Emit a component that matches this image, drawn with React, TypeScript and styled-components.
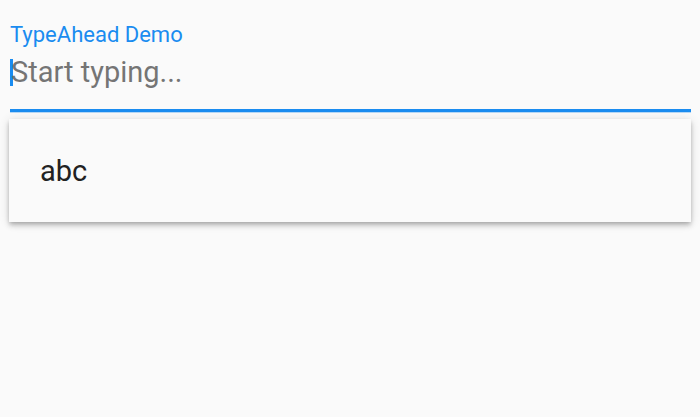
import React from 'react';
import styled, { createGlobalStyle } from 'styled-components';

const GlobalStyle = createGlobalStyle`
  html, body {
    margin: 0;
    padding: 0;
    background: #fafafa;
    font-family: Roboto, "Noto Sans", sans-serif;
  }
`;

const accent = '#1a8cf0';

const Page = styled.div`
  width: 700px;
  height: 417px;
  background: #fafafa;
  display: flex;
  flex-direction: column;
`;

const Field = styled.div`
  margin: 23px 9px 0 10px;
  display: flex;
  flex-direction: column;
  border-bottom: 3px solid ${accent};
  box-shadow: 0 1px 0 0 rgba(26, 140, 240, 0.3);
`;

const Label = styled.label`
  font-size: 22px;
  line-height: 24px;
  color: ${accent};
`;

const InputRow = styled.div`
  display: flex;
  align-items: center;
  margin-top: 9px;
  padding-bottom: 21px;
  height: 32px;
`;

const Caret = styled.span`
  width: 3px;
  height: 27px;
  background: ${accent};
  margin-right: -2px;
`;

const Placeholder = styled.span`
  font-size: 29px;
  line-height: 32px;
  color: #757575;
`;

const Suggestions = styled.div`
  margin: 7px 9px 0 9px;
  background: #fafafa;
  box-shadow: 0 2px 4px -1px rgba(0, 0, 0, 0.2), 0 4px 5px 0 rgba(0, 0, 0, 0.14),
    0 1px 10px 0 rgba(0, 0, 0, 0.12);
`;

const Option = styled.div`
  height: 103px;
  display: flex;
  align-items: center;
  padding-left: 31px;
  font-size: 29px;
  line-height: 32px;
  color: #222222;
`;

export default function App() {
  return (
    <>
      <GlobalStyle />
      <Page>
        <Field>
          <Label>TypeAhead Demo</Label>
          <InputRow>
            <Caret />
            <Placeholder>Start typing...</Placeholder>
          </InputRow>
        </Field>
        <Suggestions>
          <Option>abc</Option>
        </Suggestions>
      </Page>
    </>
  );
}
